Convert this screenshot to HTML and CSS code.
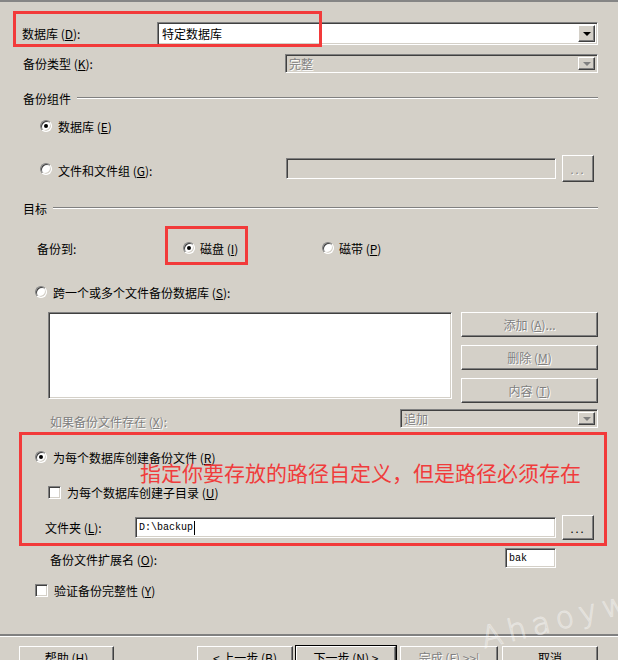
FILE: index.html
```html
<!DOCTYPE html>
<html lang="zh-CN">
<head>
  <meta charset="UTF-8">
  <meta name="viewport" content="width=device-width, initial-scale=1.0">
  <title>备份数据库向导</title>
  <link rel="stylesheet" href="styles.css">
</head>
<body>

  <div class="dialog">
    <div class="row row-db">
      <span class="label">数据库 (<u>D</u>):</span>
      <div class="combo sunken">
        <span class="combo-text">特定数据库</span>
        <span class="drop"></span>
      </div>
    </div>

    <div class="row row-type">
      <span class="label">备份类型 (<u>K</u>):</span>
      <div class="combo sunken disabled">
        <span class="combo-text dim">完整</span>
        <span class="drop"></span>
      </div>
    </div>

    <div class="group group-parts">
      <span>备份组件</span>
      <span class="etch"></span>
    </div>

    <div class="row row-opt row-dbopt">
      <span class="radio checked"></span>
      <span class="opt-text">数据库 (<u>E</u>)</span>
    </div>

    <div class="row row-files">
      <span class="radio"></span>
      <span class="opt-text files-text">文件和文件组 (<u>G</u>):</span>
      <div class="textbox sunken disabled files-box"></div>
      <button class="btn dots dim">...</button>
    </div>

    <div class="group group-target">
      <span>目标</span>
      <span class="etch"></span>
    </div>

    <div class="row row-dest">
      <span class="label">备份到:</span>
      <span class="radio checked"></span>
      <span class="opt-text disk-text">磁盘 (<u>I</u>)</span>
      <span class="radio"></span>
      <span class="opt-text">磁带 (<u>P</u>)</span>
    </div>

    <div class="row row-opt row-span">
      <span class="radio"></span>
      <span class="opt-text">跨一个或多个文件备份数据库 (<u>S</u>):</span>
    </div>

    <div class="row row-list">
      <div class="listbox sunken"></div>
      <div class="side-buttons">
        <button class="btn side dim">添加 (<u>A</u>)...</button>
        <button class="btn side dim">删除 (<u>M</u>)</button>
        <button class="btn side dim">内容 (<u>T</u>)</button>
      </div>
    </div>

    <div class="row row-exists">
      <span class="label dim">如果备份文件存在 (<u>X</u>):</span>
      <div class="combo sunken disabled">
        <span class="combo-text dim">追加</span>
        <span class="drop"></span>
      </div>
    </div>

    <div class="row row-opt row-each">
      <span class="radio checked"></span>
      <span class="opt-text">为每个数据库创建备份文件 (<u>R</u>)</span>
    </div>

    <div class="row row-opt row-sub">
      <span class="check"></span>
      <span class="opt-text">为每个数据库创建子目录 (<u>U</u>)</span>
    </div>

    <div class="row row-folder">
      <span class="label">文件夹 (<u>L</u>):</span>
      <div class="textbox sunken folder-box"><span class="mono">D:\backup</span><span class="caret"></span></div>
      <button class="btn dots">...</button>
    </div>

    <div class="row row-ext">
      <span class="label">备份文件扩展名 (<u>O</u>):</span>
      <div class="textbox sunken ext-box"><span class="mono">bak</span></div>
    </div>

    <div class="row row-opt row-verify">
      <span class="check"></span>
      <span class="opt-text">验证备份完整性 (<u>Y</u>)</span>
    </div>

    <div class="separator"></div>

    <div class="footer">
      <button class="btn foot foot-help">帮助 (<u>H</u>)</button>
      <button class="btn foot foot-back">&lt; 上一步 (<u>B</u>)</button>
      <button class="btn foot foot-next">下一步 (<u>N</u>) &gt;</button>
      <button class="btn foot foot-finish dim">完成 (<u>F</u>) &gt;&gt;|</button>
      <button class="btn foot foot-cancel">取消</button>
    </div>

    <!-- annotations drawn over the dialog -->
    <div class="mark mark-db"></div>
    <div class="mark mark-disk"></div>
    <div class="mark mark-path"></div>
    <div class="note">指定你要存放的路径自定义，但是路径必须存在</div>
    <div class="watermark">Ahaoyw</div>
  </div>

</body>
</html>
```

FILE: styles.css
```css
* {
  box-sizing: border-box;
}
body {
  margin: 0;
  background: #d4d0c8;
  font-family: "Noto Sans CJK SC", sans-serif;
  font-size: 12px;
  color: #000;
}
u {
  text-decoration: underline;
}
.dialog {
  position: relative;
  width: 618px;
  height: 660px;
  overflow: hidden;
  border-top: 2px solid #858585;
  display: flex;
  flex-direction: column;
}
.row {
  display: flex;
  align-items: center;
  flex-shrink: 0;
}
.label {
  flex-shrink: 0;
  white-space: nowrap;
}
.dim {
  color: #808080;
  text-shadow: 1px 1px #fff;
}

/* classic 3d borders */
.sunken {
  border: 1px solid;
  border-color: #808080 #fff #fff #808080;
  box-shadow: inset 1px 1px #404040, inset -1px -1px #d4d0c8;
  background: #fff;
}
.sunken.disabled {
  background: #d4d0c8;
}
.btn {
  font-family: "Noto Sans CJK SC", sans-serif;
  font-size: 12px;
  color: #000;
  background: #d4d0c8;
  border: 1px solid;
  border-color: #fff #404040 #404040 #fff;
  box-shadow: inset -1px -1px #808080;
  padding: 0;
  flex-shrink: 0;
}
.btn.dim {
  color: #808080;
}

/* combo box */
.combo {
  position: relative;
  display: flex;
  align-items: center;
  padding: 2px 2px 2px 4px;
}
.combo-text {
  flex: 1;
  line-height: 1;
}
.drop {
  position: relative;
  width: 17px;
  align-self: stretch;
  background: #d4d0c8;
  border: 1px solid;
  border-color: #fff #404040 #404040 #fff;
  box-shadow: inset -1px -1px #808080;
  display: flex;
  align-items: center;
  justify-content: center;
}
.drop::after {
  content: "";
  border-top: 4px solid #000;
  border-left: 4px solid transparent;
  border-right: 4px solid transparent;
}
.disabled .drop::after {
  border-top-color: #808080;
}

/* first rows */
.row-db {
  margin-top: 20px;
  height: 23px;
}
.row-db .label {
  margin-left: 22px;
  width: 135px;
}
.row-db .combo {
  width: 441px;
  height: 23px;
}
.row-type {
  margin-top: 9px;
  height: 19px;
}
.row-type .label {
  margin-left: 23px;
  width: 262px;
}
.row-type .combo {
  width: 313px;
  height: 19px;
  padding-left: 3px;
}

/* group headers */
.group {
  display: flex;
  align-items: center;
  height: 14px;
  padding-left: 23px;
  padding-right: 20px;
  flex-shrink: 0;
}
.etch {
  flex: 1;
  margin-left: 6px;
  border-top: 1px solid #808080;
  border-bottom: 1px solid #fff;
}
.group-parts {
  margin-top: 18px;
}
.group-target {
  margin-top: 19px;
}

/* radios and checks */
.radio {
  position: relative;
  width: 12px;
  height: 12px;
  border-radius: 50%;
  border: 1px solid;
  border-color: #808080 #fff #fff #808080;
  box-shadow: inset 1px 1px #404040, inset -1px -1px #d4d0c8;
  background: #fff;
  flex-shrink: 0;
}
.radio.checked::after {
  content: "";
  position: absolute;
  left: 3px;
  top: 3px;
  width: 4px;
  height: 4px;
  border-radius: 50%;
  background: #000;
}
.check {
  width: 13px;
  height: 13px;
  border: 1px solid;
  border-color: #808080 #fff #fff #808080;
  box-shadow: inset 1px 1px #404040, inset -1px -1px #d4d0c8;
  background: #fff;
  flex-shrink: 0;
}
.opt-text {
  margin-left: 6px;
  white-space: nowrap;
}
.row-opt {
  height: 16px;
  padding-left: 35px;
}
.row-dbopt {
  margin-top: 13px;
  padding-left: 40px;
}

/* file group row */
.row-files {
  margin-top: 21px;
  height: 27px;
  padding-left: 40px;
}
.files-text {
  width: 228px;
  padding-top: 3px;
}
.files-box {
  width: 270px;
  height: 21px;
}
.dots {
  margin-left: 6px;
  width: 32px;
  height: 27px;
  letter-spacing: 2px;
  font-size: 11px;
}

/* destination */
.row-dest {
  margin-top: 25px;
  height: 16px;
}
.row-dest .label {
  margin-left: 37px;
  width: 146px;
}
.row-dest .opt-text {
  margin-left: 5px;
}
.row-dest .disk-text {
  width: 122px;
}
.row-span {
  margin-top: 28px;
}

/* list + side buttons */
.row-list {
  margin-top: 12px;
  padding-left: 48px;
  align-items: flex-start;
}
.listbox {
  width: 404px;
  height: 87px;
}
.side-buttons {
  margin-left: 9px;
  width: 137px;
  display: flex;
  flex-direction: column;
  gap: 8px;
}
.side {
  height: 25px;
}
.row-exists {
  margin-top: 6px;
  height: 19px;
}
.row-exists .label {
  margin-left: 50px;
  width: 350px;
  padding-top: 6px;
}
.row-exists .combo {
  width: 198px;
  height: 19px;
  padding-left: 3px;
}

/* path options */
.row-each {
  margin-top: 21px;
}
.row-sub {
  margin-top: 19px;
  padding-left: 48px;
}
.row-folder {
  margin-top: 15px;
  height: 25px;
}
.row-folder .label {
  margin-left: 45px;
  width: 90px;
}
.textbox {
  display: flex;
  align-items: center;
  padding-left: 3px;
  flex-shrink: 0;
}
.folder-box {
  width: 421px;
  height: 21px;
}
.row-folder .dots {
  height: 25px;
}
.mono {
  font-family: "Liberation Mono", monospace;
  font-size: 10px;
}
.caret {
  width: 1px;
  height: 14px;
  background: #000;
  margin-left: 1px;
}
.row-ext {
  margin-top: 8px;
  height: 20px;
}
.row-ext .label {
  margin-left: 50px;
  width: 455px;
  padding-top: 3px;
}
.ext-box {
  width: 51px;
  height: 20px;
}
.row-verify {
  margin-top: 14px;
}
.row-sub .opt-text,
.row-verify .opt-text {
  margin-left: 6px;
}

/* footer */
.separator {
  margin-top: 36px;
  flex-shrink: 0;
  border-top: 2px solid #808080;
  border-bottom: 1px solid #fff;
}
.footer {
  margin-top: 9px;
  display: flex;
  flex-shrink: 0;
}
.foot {
  height: 23px;
}
.foot-help {
  margin-left: 19px;
  width: 95px;
}
.foot-back {
  margin-left: 83px;
  width: 96px;
}
.foot-next {
  margin-left: 3px;
  width: 100px;
  outline: 1px solid #000;
}
.foot-finish {
  margin-left: 4px;
  width: 98px;
}
.foot-cancel {
  margin-left: 4px;
  width: 96px;
}

/* red annotation boxes */
.mark {
  position: absolute;
  border: 3px solid #f23a3a;
}
.mark-db {
  left: 13px;
  top: 9px;
  width: 309px;
  height: 36px;
}
.mark-disk {
  left: 165px;
  top: 224px;
  width: 83px;
  height: 39px;
}
.mark-path {
  left: 19px;
  top: 430px;
  width: 588px;
  height: 114px;
}
.note {
  position: absolute;
  left: 140px;
  top: 458px;
  font-size: 21px;
  line-height: 24px;
  color: #f03c3c;
  white-space: nowrap;
}
.watermark {
  position: absolute;
  left: 486px;
  top: 618px;
  font-family: "DejaVu Sans", sans-serif;
  font-size: 30px;
  font-weight: 300;
  letter-spacing: 6px;
  color: transparent;
  -webkit-text-stroke: 1px rgba(255, 255, 255, 0.45);
  transform: rotate(-14deg);
  transform-origin: left bottom;
  white-space: nowrap;
}
```
